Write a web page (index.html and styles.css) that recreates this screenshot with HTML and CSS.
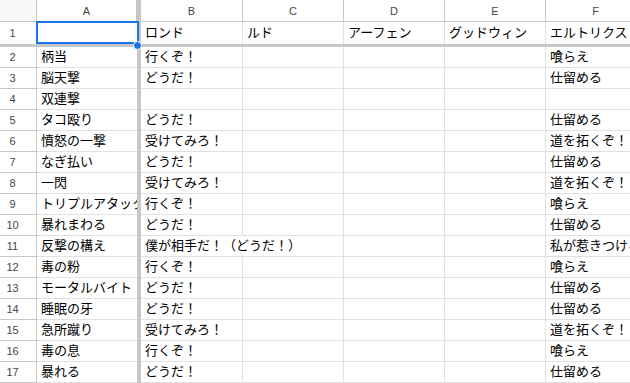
FILE: index.html
```html
<!DOCTYPE html>
<html lang="ja">
<head>
  <meta charset="UTF-8" />
  <title>スプレッドシート</title>
  <link rel="stylesheet" href="styles.css">
</head>
<body>

<div class="sheet">
  <!-- column headers -->
  <div class="corner"></div>
  <div class="col-head">A</div>
  <div class="freeze-v head"></div>
  <div class="col-head">B</div>
  <div class="col-head">C</div>
  <div class="col-head">D</div>
  <div class="col-head">E</div>
  <div class="col-head">F</div>

  <!-- row 1 (frozen) -->
  <div class="row-head top">1</div>
  <div class="cell a top selected"><span class="sel-box"></span><span class="sel-dot"></span></div>
  <div class="freeze-v"></div>
  <div class="cell top">ロンド</div>
  <div class="cell top">ルド</div>
  <div class="cell top">アーフェン</div>
  <div class="cell top">グッドウィン</div>
  <div class="cell top">エルトリクス</div>

  <div class="freeze-h"></div>

  <div class="row-head">2</div><div class="cell a">柄当</div><div class="freeze-v"></div><div class="cell">行くぞ！</div><div class="cell"></div><div class="cell"></div><div class="cell"></div><div class="cell">喰らえ</div>
  <div class="row-head">3</div><div class="cell a">脳天撃</div><div class="freeze-v"></div><div class="cell">どうだ！</div><div class="cell"></div><div class="cell"></div><div class="cell"></div><div class="cell">仕留める</div>
  <div class="row-head">4</div><div class="cell a">双連撃</div><div class="freeze-v"></div><div class="cell"></div><div class="cell"></div><div class="cell"></div><div class="cell"></div><div class="cell"></div>
  <div class="row-head">5</div><div class="cell a">タコ殴り</div><div class="freeze-v"></div><div class="cell">どうだ！</div><div class="cell"></div><div class="cell"></div><div class="cell"></div><div class="cell">仕留める</div>
  <div class="row-head">6</div><div class="cell a">憤怒の一撃</div><div class="freeze-v"></div><div class="cell">受けてみろ！</div><div class="cell"></div><div class="cell"></div><div class="cell"></div><div class="cell">道を拓くぞ！</div>
  <div class="row-head">7</div><div class="cell a">なぎ払い</div><div class="freeze-v"></div><div class="cell">どうだ！</div><div class="cell"></div><div class="cell"></div><div class="cell"></div><div class="cell">仕留める</div>
  <div class="row-head">8</div><div class="cell a">一閃</div><div class="freeze-v"></div><div class="cell">受けてみろ！</div><div class="cell"></div><div class="cell"></div><div class="cell"></div><div class="cell">道を拓くぞ！</div>
  <div class="row-head">9</div><div class="cell a">トリプルアタック</div><div class="freeze-v"></div><div class="cell">行くぞ！</div><div class="cell"></div><div class="cell"></div><div class="cell"></div><div class="cell">喰らえ</div>
  <div class="row-head">10</div><div class="cell a">暴れまわる</div><div class="freeze-v"></div><div class="cell">どうだ！</div><div class="cell"></div><div class="cell"></div><div class="cell"></div><div class="cell">仕留める</div>
  <div class="row-head">11</div><div class="cell a">反撃の構え</div><div class="freeze-v"></div><div class="cell spill">僕が相手だ！（どうだ！）</div><div class="cell"></div><div class="cell"></div><div class="cell"></div><div class="cell">私が惹きつける</div>
  <div class="row-head">12</div><div class="cell a">毒の粉</div><div class="freeze-v"></div><div class="cell">行くぞ！</div><div class="cell"></div><div class="cell"></div><div class="cell"></div><div class="cell">喰らえ</div>
  <div class="row-head">13</div><div class="cell a">モータルバイト</div><div class="freeze-v"></div><div class="cell">どうだ！</div><div class="cell"></div><div class="cell"></div><div class="cell"></div><div class="cell">仕留める</div>
  <div class="row-head">14</div><div class="cell a">睡眠の牙</div><div class="freeze-v"></div><div class="cell">どうだ！</div><div class="cell"></div><div class="cell"></div><div class="cell"></div><div class="cell">仕留める</div>
  <div class="row-head">15</div><div class="cell a">急所蹴り</div><div class="freeze-v"></div><div class="cell">受けてみろ！</div><div class="cell"></div><div class="cell"></div><div class="cell"></div><div class="cell">道を拓くぞ！</div>
  <div class="row-head">16</div><div class="cell a">毒の息</div><div class="freeze-v"></div><div class="cell">行くぞ！</div><div class="cell"></div><div class="cell"></div><div class="cell"></div><div class="cell">喰らえ</div>
  <div class="row-head">17</div><div class="cell a">暴れる</div><div class="freeze-v"></div><div class="cell">どうだ！</div><div class="cell"></div><div class="cell"></div><div class="cell"></div><div class="cell">仕留める</div>
</div>

</body>
</html>
```

FILE: styles.css
```css
body {
  margin: 0;
  background: #fff;
  overflow: hidden;
  font-family: "Liberation Sans", "Noto Sans CJK JP", sans-serif;
}

.sheet {
  display: grid;
  grid-template-columns: 37px 100px 4px 102px 101px 101px 101px 100px;
  grid-template-rows: 22px 22px 3px;
  grid-auto-rows: 21px;
  width: 646px;
}

.corner {
  background: #f8f9fa;
  border-right: 1px solid #c4c7c5;
  border-bottom: 1px solid #c4c7c5;
}

.col-head {
  display: flex;
  align-items: center;
  justify-content: center;
  font-size: 11px;
  color: #444746;
  border-right: 1px solid #c4c7c5;
  border-bottom: 1px solid #c4c7c5;
}

.row-head {
  display: flex;
  align-items: center;
  justify-content: center;
  padding-right: 11px;
  font-size: 11px;
  color: #444746;
  border-right: 1px solid #c4c7c5;
  border-bottom: 1px solid #c4c7c5;
}

.row-head.top {
  border-bottom: none;
}

.freeze-v {
  background: #c7c7c7;
}

.freeze-v.head {
  background: #c7c7c7;
}

.freeze-h {
  grid-column: 1 / -1;
  background: #c7c7c7;
}

.cell {
  box-sizing: border-box;
  padding-left: 4px;
  font-size: 13px;
  line-height: 20px;
  color: #000;
  white-space: nowrap;
  overflow: hidden;
  border-right: 1px solid #e1e1e1;
  border-bottom: 1px solid #e1e1e1;
}

.cell.a {
  border-right: none;
}

.cell.top {
  border-bottom: none;
  line-height: 22px;
}

.cell.spill {
  overflow: visible;
  border-right-color: transparent;
}

.selected {
  position: relative;
  overflow: visible;
}

.sel-box {
  position: absolute;
  left: -1px;
  top: -1px;
  right: -2px;
  bottom: 0;
  border: 2px solid #1a73e8;
}

.sel-dot {
  position: absolute;
  right: -5px;
  bottom: -6px;
  width: 7px;
  height: 7px;
  border-radius: 50%;
  background: #1a73e8;
  border: 1px solid #fff;
  z-index: 2;
}
```
